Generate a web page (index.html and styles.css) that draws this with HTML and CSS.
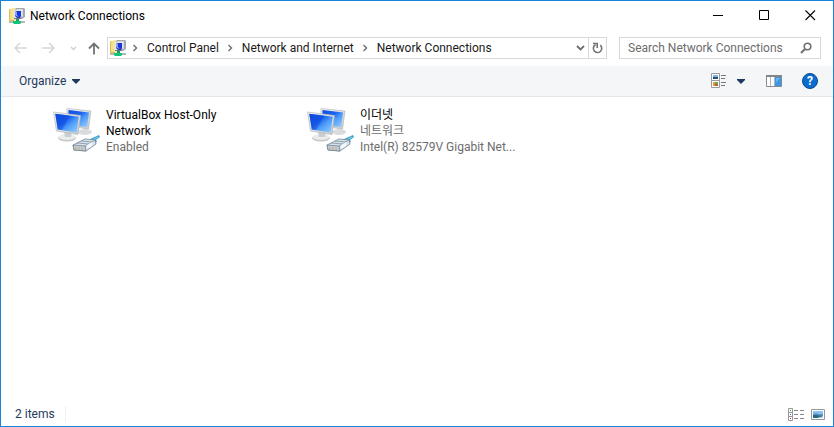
FILE: index.html
```html
<!DOCTYPE html>
<html lang="en">
<head>
<meta charset="utf-8">
<title>Network Connections</title>
<link rel="stylesheet" href="styles.css">
</head>
<body>
<svg class="defs" aria-hidden="true">
  <defs>
    <linearGradient id="screen" x1="0" y1="0" x2="1" y2="1">
      <stop offset="0" stop-color="#0f4be0"/><stop offset=".4" stop-color="#1c62f0"/><stop offset=".6" stop-color="#4c9bfa"/><stop offset="1" stop-color="#9ad2ff"/>
    </linearGradient>
    <linearGradient id="bezel" x1="0" y1="0" x2="1" y2="1">
      <stop offset="0" stop-color="#f6f6f6"/><stop offset="1" stop-color="#c4c7ca"/>
    </linearGradient>
    <linearGradient id="folder" x1="0" y1="0" x2="1" y2="0">
      <stop offset="0" stop-color="#f3d878"/><stop offset="1" stop-color="#fbeeb4"/>
    </linearGradient>
    <symbol id="net-small" viewBox="0 0 16 16">
      <path d="M0 1h3l1-1h4v13H0z" fill="url(#folder)"/>
      <path d="M.5 1.500v11H5" fill="none" stroke="#dcbc58"/>
      <path d="M7 0h8l1 1v8l-3 2H6V2z" fill="#a4a8ac"/>
      <path d="M8 1h6v8h-1V2H7z" fill="#d5d8dc"/>
      <path d="M5 3l2-1h6v6l-2 2H5z" fill="#dfe5fb"/>
      <path d="M6 4l2-1h4v5l-1 2H8L6 8z" fill="#2234b8"/>
      <path d="M8 4h3v4H9z" fill="#1438ee"/>
      <path d="M6 4l2 0v3l2 2-3-1-1-1z" fill="#8fa2f2"/>
      <path d="M5 10h7v1H5z" fill="#6f7688"/>
      <path d="M7 11h3v2H7z" fill="#169c5a"/>
      <path d="M0 13h16v2H0z" fill="#b4b8b6"/>
      <path d="M4 13h8v2l-1 1H5l-1-1z" fill="#12c37c"/>
    </symbol>
    <symbol id="net-large" viewBox="0 0 48 48">
      <ellipse cx="32" cy="25" rx="7" ry="3" fill="#d9dbdd"/>
      <path d="M14 1.500L38 4 35.500 22 14 19z" fill="url(#bezel)" stroke="#b5b8bb" stroke-width=".7"/>
      <path d="M15.500 3L36 5.500 34 20 15 18z" fill="url(#screen)"/>
      <ellipse cx="14" cy="31" rx="9" ry="3.500" fill="#c3c6c9"/>
      <ellipse cx="14" cy="30" rx="8.500" ry="3" fill="#ebecec"/>
      <path d="M11 24h8l-1 6h-6z" fill="#cbced0"/>
      <path d="M.5 5L27.500 8.500 25 27.500 3.500 24z" fill="url(#bezel)" stroke="#b5b8bb" stroke-width=".7"/>
      <path d="M2.200 6.700L25.700 9.800 23.600 25.500 4.800 22.400z" fill="url(#screen)"/>
      <path d="M2.200 6.700L17 8.600 9 23 4.800 22.400z" fill="#0a43d6" opacity=".4"/>
      <path d="M37 32l9-4 1 2-4 3 1 2-5 2z" fill="#3fa4cf"/>
      <path d="M38 34l7-4" stroke="#a7dcef" stroke-width=".8"/>
      <path d="M20 38l12-6 10 1 1 4-10 7-12-1z" fill="#dbe4ec" stroke="#708394" stroke-width=".8"/>
      <path d="M20 38l12 1 1 5-12-1z" fill="#c3ceda" stroke="#708394" stroke-width=".8"/>
      <path d="M32 39l10-6M24 36l12 1M28 34l11 1" fill="none" stroke="#7d90a2" stroke-width=".8"/>
      <path d="M23 40v2.500M26 40v2.500M29 40.500v2.500" stroke="#c2a860"/>
      <path d="M34 38l5-3v4l-5 3z" fill="#f4f8fb"/>
    </symbol>
    <symbol id="crumb" viewBox="0 0 6 8"><path d="M1.500 1l3 3-3 3" fill="none" stroke="#757575" stroke-width="1.500"/></symbol>
  </defs>
</svg>
<div class="window">
  <header class="titlebar">
    <svg class="icon16" aria-hidden="true"><use href="#net-small"/></svg>
    <h1 class="title">Network Connections</h1>
    <button class="caption" type="button" aria-label="Minimize"><svg width="11" height="11"><path d="M0 5.500h10" stroke="#000"/></svg></button>
    <button class="caption" type="button" aria-label="Maximize"><svg width="11" height="11"><path d="M.5.500h9v9h-9z" fill="none" stroke="#000"/></svg></button>
    <button class="caption" type="button" aria-label="Close"><svg width="11" height="11"><path d="M.5.500l9.500 9.500M10 .500L.5 10" stroke="#000" stroke-width="1.100"/></svg></button>
  </header>
  <nav class="navbar" aria-label="Location">
    <div class="arrows">
      <button type="button" aria-label="Back" disabled><svg width="13" height="12"><path d="M6 1L1 6l5 5M1 6h12" fill="none" stroke="#d6d6d6" stroke-width="1.500"/></svg></button>
      <button type="button" aria-label="Forward" disabled><svg width="13" height="12"><path d="M7 1l5 5-5 5M12 6H0" fill="none" stroke="#d6d6d6" stroke-width="1.500"/></svg></button>
      <button type="button" aria-label="Recent locations" disabled><svg width="7" height="5"><path d="M1 1l2.500 2.500L6 1" fill="none" stroke="#d0d0d0" stroke-width="1.500"/></svg></button>
      <button type="button" aria-label="Up"><svg width="12" height="13"><path d="M1 6.500l5-5 5 5M6 2v10.500" fill="none" stroke="#737373" stroke-width="1.800"/></svg></button>
    </div>
    <div class="address">
      <svg class="icon16" aria-hidden="true"><use href="#net-small"/></svg>
      <svg class="crumb" aria-hidden="true"><use href="#crumb"/></svg>
      <a href="#">Control Panel</a>
      <svg class="crumb" aria-hidden="true"><use href="#crumb"/></svg>
      <a href="#">Network and Internet</a>
      <svg class="crumb" aria-hidden="true"><use href="#crumb"/></svg>
      <a href="#">Network Connections</a>
      <button class="history" type="button" aria-label="Previous locations"><svg width="9" height="6"><path d="M1 1l3.500 3.500L8 1" fill="none" stroke="#6f6f6f" stroke-width="1.800"/></svg></button>
      <button class="refresh" type="button" aria-label="Refresh"><svg width="11" height="12"><path d="M8.300 3.200A4.200 4.200 0 1 1 3.500 2.700" fill="none" stroke="#747474" stroke-width="1.600"/><path d="M1 1.500h4.200v4.500" fill="none" stroke="#747474" stroke-width="1.600"/></svg></button>
    </div>
    <form class="search">
      <input type="search" aria-label="Search Network Connections" placeholder="Search Network Connections">
      <button type="button" aria-label="Search"><svg width="12" height="12"><circle cx="7.500" cy="4.500" r="3.300" fill="none" stroke="#6f6f6f" stroke-width="1.600"/><path d="M5 7L1 11" stroke="#6f6f6f" stroke-width="2"/></svg></button>
    </form>
  </nav>
  <div class="toolbar">
    <button class="organize" type="button">Organize <svg width="8" height="5"><path d="M0 0h8v1L4 5 0 1z" fill="#1e395b"/></svg></button>
    <button type="button" aria-label="Change your view"><svg width="16" height="16"><path d="M.5.500h8v7h-8zM.5 7.500h8v7h-8z" fill="#fff" stroke="#9a9a9a"/><path d="M2 2h5v2H2z" fill="#7fb4ea"/><path d="M2 4h5v2H2z" fill="#24517c"/><path d="M2 9h2v4H2z" fill="#df9a3e"/><path d="M4 9h3v2H4z" fill="#67aa47"/><path d="M4 11h3v2H4z" fill="#b5603b"/><path d="M10 2.500h5M10 5.500h4M10 9.500h5M10 12.500h4" stroke="#777"/></svg></button>
    <button class="view-menu" type="button" aria-label="More view options"><svg width="8" height="5"><path d="M0 0h8v1L4 5 0 1z" fill="#1e395b"/></svg></button>
    <button class="preview" type="button" aria-label="Show the preview pane"><svg width="16" height="12"><path d="M.5.500h15v11H.5z" fill="#fff" stroke="#8a8a8a"/><path d="M0 0h16v2H0z" fill="#858585"/><path d="M4.500 2v9M8.500 2v9" stroke="#b5b5b5"/><path d="M9 2h6v9H9z" fill="#3b97e6"/><path d="M10 3h4l-4 5z" fill="#62b3f2"/></svg></button>
    <button class="help" type="button" aria-label="Help">?</button>
  </div>
  <main class="items">
    <article class="item">
      <svg class="icon48" aria-hidden="true"><use href="#net-large"/></svg>
      <div class="info">
        <h2>VirtualBox Host-Only Network</h2>
        <p>Enabled</p>
      </div>
    </article>
    <article class="item">
      <svg class="icon48" aria-hidden="true"><use href="#net-large"/></svg>
      <div class="info">
        <h2 lang="ko">이더넷</h2>
        <p lang="ko">네트워크</p>
        <p class="device">Intel(R) 82579V Gigabit Net...</p>
      </div>
    </article>
  </main>
  <footer class="status">
    <span class="count">2 items</span>
    <button type="button" aria-label="Details view"><svg width="16" height="13"><path d="M.5.500h4v12h-4zM.5 4.500h4M.5 8.500h4" fill="#fff" stroke="#989898"/><path d="M2 2h1v1H2z" fill="#4a8d4a"/><path d="M2 6h1v1H2z" fill="#2a7be0"/><path d="M2 10h1v1H2z" fill="#e02a2a"/><path d="M6 2.500h4M12 2.500h4M6 6.500h4M12 6.500h4M6 10.500h4M12 10.500h4" stroke="#858585"/></svg></button>
    <button type="button" aria-label="Large icons view"><svg width="14" height="11"><path d="M.5.500h13v10H.5z" fill="#fff" stroke="#979797"/><path d="M2 2h10v7H2z" fill="#8bc3f5"/><path d="M2 5l3-1 3 1h4v4H2z" fill="#5a97cc"/><path d="M2 6l3 0 7 1v1L6 9H2z" fill="#2f6480"/><path d="M6 9l6-2v2z" fill="#a9d2e8"/></svg></button>
  </footer>
</div>
</body>
</html>
```
FILE: styles.css
```css
* { box-sizing: border-box; }
body {
  margin: 0;
  font: 12px/16px Roboto, "Noto Sans CJK KR", sans-serif;
  color: #000;
}
button {
  display: flex;
  align-items: center;
  justify-content: center;
  padding: 0;
  border: 0;
  background: none;
  font: inherit;
  color: inherit;
}
svg { display: block; flex: none; }
h1, h2, p { margin: 0; font-size: 12px; font-weight: 400; }
a { color: #1a1a1a; text-decoration: none; white-space: nowrap; }
.defs { position: absolute; width: 0; height: 0; }
.icon16 { width: 16px; height: 16px; }
.icon48 { width: 48px; height: 48px; }

.window {
  display: flex;
  flex-direction: column;
  min-height: 100vh;
  border: 1px solid #1883d7;
  background: #fff;
}

.titlebar { display: flex; align-items: center; height: 29px; padding-left: 8px; }
.title { flex: 1; padding-left: 5px; }
.caption { width: 46px; height: 29px; }

.navbar { display: flex; align-items: center; gap: 12px; padding: 7px 12px 7px 13px; }
.arrows { display: flex; align-items: center; gap: 15px; margin-right: -5px; }
.arrows button:last-child { margin-left: -4px; }
.address {
  display: flex;
  flex: 1;
  align-items: center;
  height: 22px;
  padding-left: 2px;
  border: 1px solid #d9d9d9;
}
.crumb { width: 6px; height: 8px; margin: 0 9px 0 8px; }
.icon16 + .crumb { margin-left: 6px; }
.history { width: 16px; height: 20px; margin-left: auto; }
.refresh { width: 18px; height: 20px; border-left: 1px solid #d9d9d9; }
.search {
  display: flex;
  align-items: center;
  width: 202px;
  height: 22px;
  padding: 0 8px;
  border: 1px solid #d9d9d9;
}
.search input {
  flex: 1;
  min-width: 0;
  padding: 0;
  border: 0;
  outline: 0;
  background: none;
  font: inherit;
}
.search input::placeholder { color: #6d6d6d; opacity: 1; }

.toolbar {
  display: flex;
  align-items: center;
  height: 31px;
  padding: 0 15px 0 18px;
  border-bottom: 1px solid #e4e6e9;
  background: #f5f6f7;
  color: #1e395b;
}
.organize { gap: 6px; margin-right: auto; }
.view-menu { margin: 0 21px 0 10px; }
.help {
  width: 16px;
  height: 16px;
  margin-left: 20px;
  border: 1px solid #0a4a90;
  border-radius: 50%;
  background: #0a6cce;
  color: #fff;
  font-weight: 700;
}

.items {
  display: grid;
  flex: 1;
  grid-template-columns: repeat(auto-fill, 254px);
  align-content: start;
  padding: 10px 0 0 52px;
}
.item { display: flex; gap: 5px; }
.info { width: 152px; }
.info p { color: #6d6d6d; }
.device { white-space: nowrap; }

.status { display: flex; align-items: center; gap: 7px; height: 24px; padding: 0 8px 0 14px; color: #1e395b; }
.count { margin-right: auto; padding-right: 10px; border-right: 1px solid #f0f0f0; }
```
